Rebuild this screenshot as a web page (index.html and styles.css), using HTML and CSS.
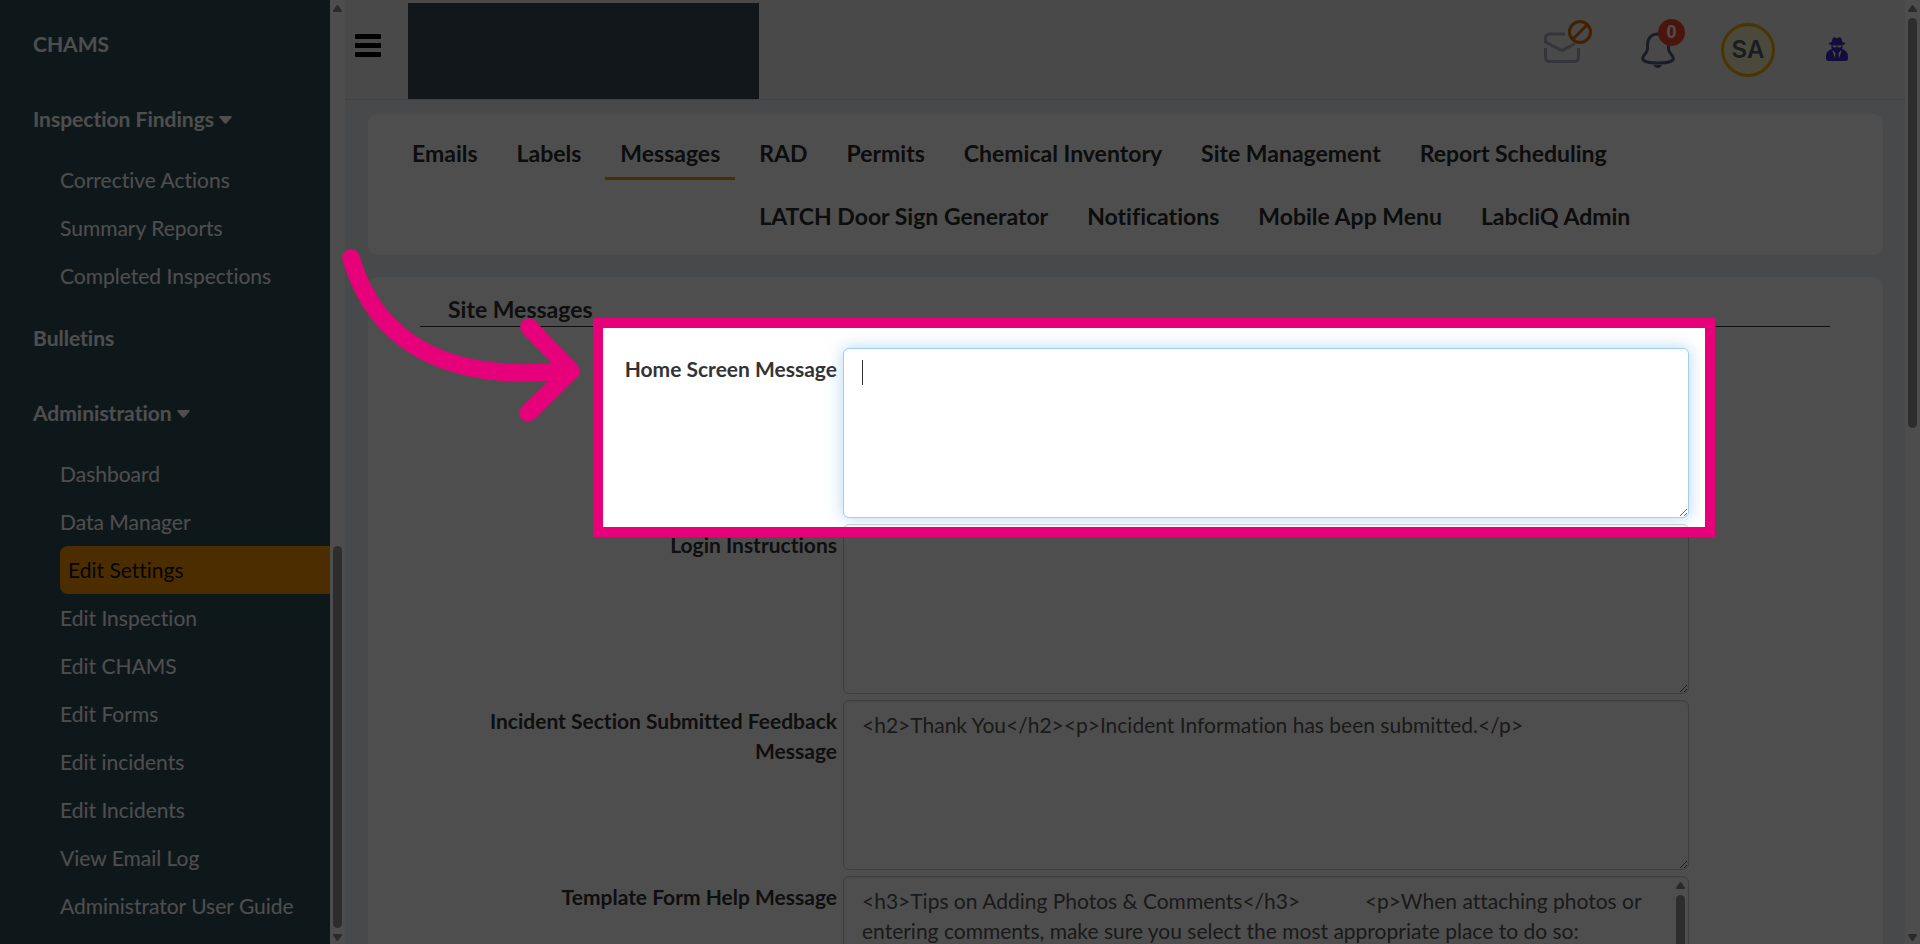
FILE: index.html
```html
<!DOCTYPE html>
<html lang="en">
<head>
<meta charset="utf-8">
<title>Edit Settings - Messages</title>
<link rel="stylesheet" href="styles.css">
</head>
<body>
<div class="app">
  <nav class="sidebar" aria-label="Main menu">
    <div class="menu">
      <a class="menu-head" href="#">CHAMS</a>
      <a class="menu-head" href="#">Inspection Findings <svg class="caret" viewBox="0 0 13 8"><path d="M1.2 0h10.6q1.6.2.6 1.6L7.6 7.2q-1.100.9-2.200 0L.6 1.600Q-.4.2 1.200 0z"/></svg></a>
      <ul class="submenu">
        <li><a href="#">Corrective Actions</a></li>
        <li><a href="#">Summary Reports</a></li>
        <li><a href="#">Completed Inspections</a></li>
      </ul>
      <a class="menu-head" href="#">Bulletins</a>
      <a class="menu-head" href="#">Administration <svg class="caret" viewBox="0 0 13 8"><path d="M1.2 0h10.6q1.6.2.6 1.6L7.6 7.2q-1.100.9-2.200 0L.6 1.600Q-.4.2 1.200 0z"/></svg></a>
      <ul class="submenu">
        <li><a href="#">Dashboard</a></li>
        <li><a href="#">Data Manager</a></li>
        <li><a class="active" href="#">Edit Settings</a></li>
        <li><a href="#">Edit Inspection</a></li>
        <li><a href="#">Edit CHAMS</a></li>
        <li><a href="#">Edit Forms</a></li>
        <li><a href="#">Edit incidents</a></li>
        <li><a href="#">Edit Incidents</a></li>
        <li><a href="#">View Email Log</a></li>
        <li><a href="#">Administrator User Guide</a></li>
      </ul>
    </div>
    <div class="scrollbar scrollbar-menu">
      <svg class="arrow arrow-up" viewBox="0 0 9 7"><path d="M3.600.6q.9-1 1.800 0L8.700 5.200q.7 1.800-.9 1.800H1.200Q-.4 7 .3 5.200z"/></svg>
      <div class="track"><div class="thumb"></div></div>
      <svg class="arrow" viewBox="0 0 9 7"><path d="M3.600 6.400q.9 1 1.800 0L8.700 1.800Q9.400 0 7.800 0H1.200Q-.4 0 .3 1.800z"/></svg>
    </div>
  </nav>

  <div class="main">
    <header class="topbar">
      <button class="burger" aria-label="Toggle menu"><span></span><span></span><span></span></button>
      <div class="brand"></div>
      <button class="icon-btn mail" aria-label="Email disabled">
        <svg width="48" height="60" viewBox="0 0 48 60" fill="none" stroke-width="3">
          <path d="M21 14H6Q1.500 14 1.500 18.500V22L18 30.500L31 23.500" stroke="#aaadbf"/>
          <path d="M1.500 28V37Q1.500 41.500 6 41.500H30Q34.500 41.500 34.500 37V28" stroke="#aaadbf"/>
          <circle cx="36" cy="12" r="10.500" stroke="#dc6c00"/>
          <path d="M29 19L43 5" stroke="#dc6c00"/>
        </svg>
      </button>
      <button class="icon-btn bell" aria-label="Notifications">
        <svg width="34" height="60" viewBox="0 0 34 60">
          <path d="M17 14C9.500 14 6.500 19 6.500 25V29C6.500 33 1.700 35 1.700 38.500C1.700 41.500 9 43 17 43S32.300 41.500 32.300 38.500C32.300 35 27.500 33 27.500 29V25C27.500 19 24.500 14 17 14Z" fill="none" stroke="#54617a" stroke-width="3"/>
          <path d="M12.500 45h8.500q-1 3-4.200 3t-4.300-3z" fill="#54617a"/>
        </svg>
        <span class="badge">0</span>
      </button>
      <button class="avatar">SA</button>
      <button class="icon-btn spy" aria-label="Impersonate user">
        <svg width="22" height="26" viewBox="0 0 22 26">
          <path d="M8 .2q1 0 3 1 2-1 3-1 1.500 0 2.300 4.800 3 .7 3 1.500 0 .8-2.700 1.400v3.100l-.6 1.200h1q5 2 5 7v2.500q0 2.300-2.300 2.300H2.300Q0 24 0 21.700v-2.500q0-5 5-7h1L5.400 11V7.900Q2.700 7.300 2.700 6.500q0-.8 3-1.500Q6.500.2 8 .2z" fill="#3d2dc2"/>
          <path d="M6.400 8.200q4.600.7 9.200 0-.3 2.300-2.100 2.300-1.700 0-2.100-1.300h-.8q-.4 1.300-2.100 1.300-1.800 0-2.100-2.300z" fill="#f2f3f5"/>
          <path d="M7 13.500l2.500 2.500-.4 5.500-2.600-7.500zM15 13.500l-2.500 2.500.4 5.500 2.600-7.500z" fill="#f2f3f5"/>
        </svg>
      </button>
    </header>

    <section class="card tabs-card">
      <ul class="tabs">
        <li><a href="#">Emails</a></li>
        <li><a href="#">Labels</a></li>
        <li class="current"><a href="#">Messages</a></li>
        <li><a href="#">RAD</a></li>
        <li><a href="#">Permits</a></li>
        <li><a href="#">Chemical Inventory</a></li>
        <li><a href="#">Site Management</a></li>
        <li><a href="#">Report Scheduling</a></li>
        <li><a href="#">LATCH Door Sign Generator</a></li>
        <li><a href="#">Notifications</a></li>
        <li><a href="#">Mobile App Menu</a></li>
        <li><a href="#">LabcliQ Admin</a></li>
      </ul>
    </section>

    <form class="card form-card">
      <h2 class="section-title">Site Messages</h2>
      <div class="field">
        <label for="home">Home Screen Message</label>
        <div class="box focused"><textarea id="home" rows="5"></textarea><span class="text-cursor"></span></div>
        <div class="spotlight"></div>
        <svg class="pointer" width="245" height="185" viewBox="0 0 245 185">
          <path d="M11 13C34 92 100 138 222 126M189 82L231 126L188 168" fill="none" stroke="#e6007a" stroke-width="17.500" stroke-linecap="round" stroke-linejoin="round"/>
        </svg>
      </div>
      <div class="field">
        <label for="login">Login Instructions</label>
        <div class="box"><textarea id="login" rows="5"></textarea></div>
      </div>
      <div class="field">
        <label for="incident">Incident Section Submitted Feedback Message</label>
        <div class="box"><textarea id="incident" rows="5">&lt;h2&gt;Thank You&lt;/h2&gt;&lt;p&gt;Incident Information has been submitted.&lt;/p&gt;</textarea></div>
      </div>
      <div class="field">
        <label for="template">Template Form Help Message</label>
        <div class="box scrolling"><textarea id="template" rows="5">&lt;h3&gt;Tips on Adding Photos &amp; Comments&lt;/h3&gt;            &lt;p&gt;When attaching photos or entering comments, make sure you select the most appropriate place to do so:</textarea>
          <div class="scrollbar scrollbar-text">
            <svg class="arrow arrow-up" viewBox="0 0 9 7"><path d="M3.600.6q.9-1 1.800 0L8.700 5.200q.7 1.800-.9 1.800H1.200Q-.4 7 .3 5.200z"/></svg>
            <div class="track"><div class="thumb"></div></div>
          </div>
        </div>
      </div>
    </form>
  </div>

  <div class="scrollbar scrollbar-page">
    <svg class="arrow arrow-up" viewBox="0 0 9 7"><path d="M3.600.6q.9-1 1.800 0L8.700 5.200q.7 1.800-.9 1.800H1.200Q-.4 7 .3 5.200z"/></svg>
    <div class="track"><div class="thumb"></div></div>
    <svg class="arrow" viewBox="0 0 9 7"><path d="M3.600 6.400q.9 1 1.800 0L8.700 1.800Q9.400 0 7.800 0H1.200Q-.4 0 .3 1.800z"/></svg>
  </div>
</div>
</body>
</html>
```

FILE: styles.css
```css
* {
  box-sizing: border-box;
}

body {
  margin: 0;
  overflow: hidden;
  font-family: Lato, "Liberation Sans", sans-serif;
  font-size: 21px;
  font-variant-ligatures: none;
  line-height: 30px;
  color: #333;
}

a {
  color: inherit;
  text-decoration: none;
}

ul {
  list-style: none;
  margin: 0;
  padding: 0;
}

button {
  border: 0;
  padding: 0;
  background: none;
  font: inherit;
}

.app {
  display: flex;
  height: 100vh;
  overflow: hidden;
}

/* Sidebar */

.sidebar {
  display: flex;
  flex: 0 0 345px;
}

.menu {
  flex: 1;
  padding: 6px 0 14px 33px;
  background: #304e59;
  color: #fff;
  overflow: hidden;
}

.menu-head {
  display: block;
  line-height: 75px;
  font-weight: 700;
}

.caret {
  width: 13px;
  height: 8px;
  vertical-align: 3px;
  fill: #fff;
}

.submenu {
  padding-left: 27px;
}

.submenu a {
  display: block;
  line-height: 48px;
}

.submenu .active {
  padding-left: 8px;
  border-radius: 8px 0 0 8px;
  background: #f89200;
  color: #111;
}

/* Scrollbars */

.scrollbar {
  display: flex;
  flex: 0 0 15px;
  flex-direction: column;
  align-items: center;
  gap: 6px;
  padding: 5px 0 3px;
  background: #fcfcfc;
}

.track {
  display: flex;
  flex: 1;
  width: 9px;
}

.thumb {
  width: 9px;
  border-radius: 5px;
  background: #939393;
}

.arrow {
  width: 9px;
  height: 7px;
  fill: #8b8b8b;
}

.scrollbar-menu .track {
  align-items: flex-end;
}

.scrollbar-menu .thumb {
  height: 42%;
}

.scrollbar-page .thumb {
  height: 45%;
}

/* Top bar */

.main {
  flex: 1;
  min-width: 0;
  background: #ebedf2;
}

.topbar {
  display: flex;
  align-items: center;
  height: 100px;
  padding: 0 57px 0 10px;
  border-bottom: 1px solid #d3d5da;
  background: #eeeff3;
}

.burger {
  display: flex;
  flex-direction: column;
  gap: 4px;
  width: 26px;
  margin-bottom: 9px;
}

.burger span {
  height: 5px;
  border-radius: 1px;
  background: #000;
}

.brand {
  width: 351px;
  height: 96px;
  margin: 3px auto 0 27px;
  background: #384c58;
}

.icon-btn {
  display: flex;
  position: relative;
}

.mail {
  margin-right: 49px;
}

.bell {
  margin-right: 46px;
}

.badge {
  position: absolute;
  top: -1px;
  left: 17px;
  width: 27px;
  border-radius: 14px;
  background: #f04a26;
  color: #fff;
  font-family: "Liberation Sans", sans-serif;
  font-size: 18px;
  font-weight: 700;
  line-height: 27px;
  text-align: center;
}

.avatar {
  width: 54px;
  height: 54px;
  margin-right: 51px;
  border: 3px solid #f2a900;
  border-radius: 50%;
  background: #f3efc4;
  color: #4f6173;
  font-family: Inter, "Liberation Sans", sans-serif;
  font-size: 24px;
  font-weight: 600;
}

/* Cards */

.card {
  margin: 0 22px 22px 23px;
  border-radius: 10px;
  background: #fff;
}

.tabs-card {
  display: flow-root;
  margin-top: 14px;
  padding: 7px 29px 8px;
}

.tabs li {
  float: left;
  height: 63px;
  margin-right: 9px;
  padding-top: 8px;
}

.tabs .current {
  height: 71px;
}

.tabs a {
  display: block;
  padding: 0 15px;
  border-bottom: 3px solid transparent;
  color: #2c2c2c;
  font-size: 23px;
  font-weight: 700;
  line-height: 48px;
}

.tabs .current a {
  border-color: #f89200;
}

.form-card {
  min-height: 800px;
  padding: 17px 53px 0 52px;
}

.section-title {
  margin: 0 0 21px;
  padding: 0 0 1px 28px;
  border-bottom: 1px solid #333;
  font-size: 23px;
  font-weight: 700;
  line-height: 31px;
}

.field {
  display: flex;
  position: relative;
  margin-bottom: 6px;
}

.field label {
  width: 30%;
  padding: 6px 6px 0 60px;
  font-weight: 700;
  text-align: right;
}

.box {
  display: flex;
  position: relative;
  width: 60%;
}

.box textarea {
  display: block;
  width: 100%;
  padding: 9px 18px;
  border: 1px solid #ccc;
  border-radius: 6px;
  outline: 0;
  background: #fff;
  box-shadow: inset 0 1px 2px rgba(0, 0, 0, 0.08);
  color: #555;
  font: inherit;
  resize: vertical;
}

.focused textarea {
  border-color: #a5cdec;
  box-shadow: 0 0 16px rgba(102, 175, 233, 0.5);
}

.scrolling textarea {
  padding-right: 34px;
  overflow: hidden;
  resize: none;
}

.text-cursor {
  position: absolute;
  top: 12px;
  left: 19px;
  width: 1px;
  height: 25px;
  background: #333;
}

.scrollbar-text {
  position: absolute;
  top: 1px;
  right: 1px;
  bottom: 1px;
  width: 15px;
  background: none;
}

.scrollbar-text .thumb {
  height: 80%;
}

/* Guided-tour highlight */

.spotlight {
  position: absolute;
  z-index: 1;
  top: -30px;
  right: 115px;
  bottom: -19px;
  left: 173px;
  border: 10px solid #e6007a;
  box-shadow: 0 0 0 9999px rgba(0, 0, 0, 0.694);
}

.pointer {
  position: absolute;
  z-index: 2;
  top: -103px;
  left: -80px;
}
```
